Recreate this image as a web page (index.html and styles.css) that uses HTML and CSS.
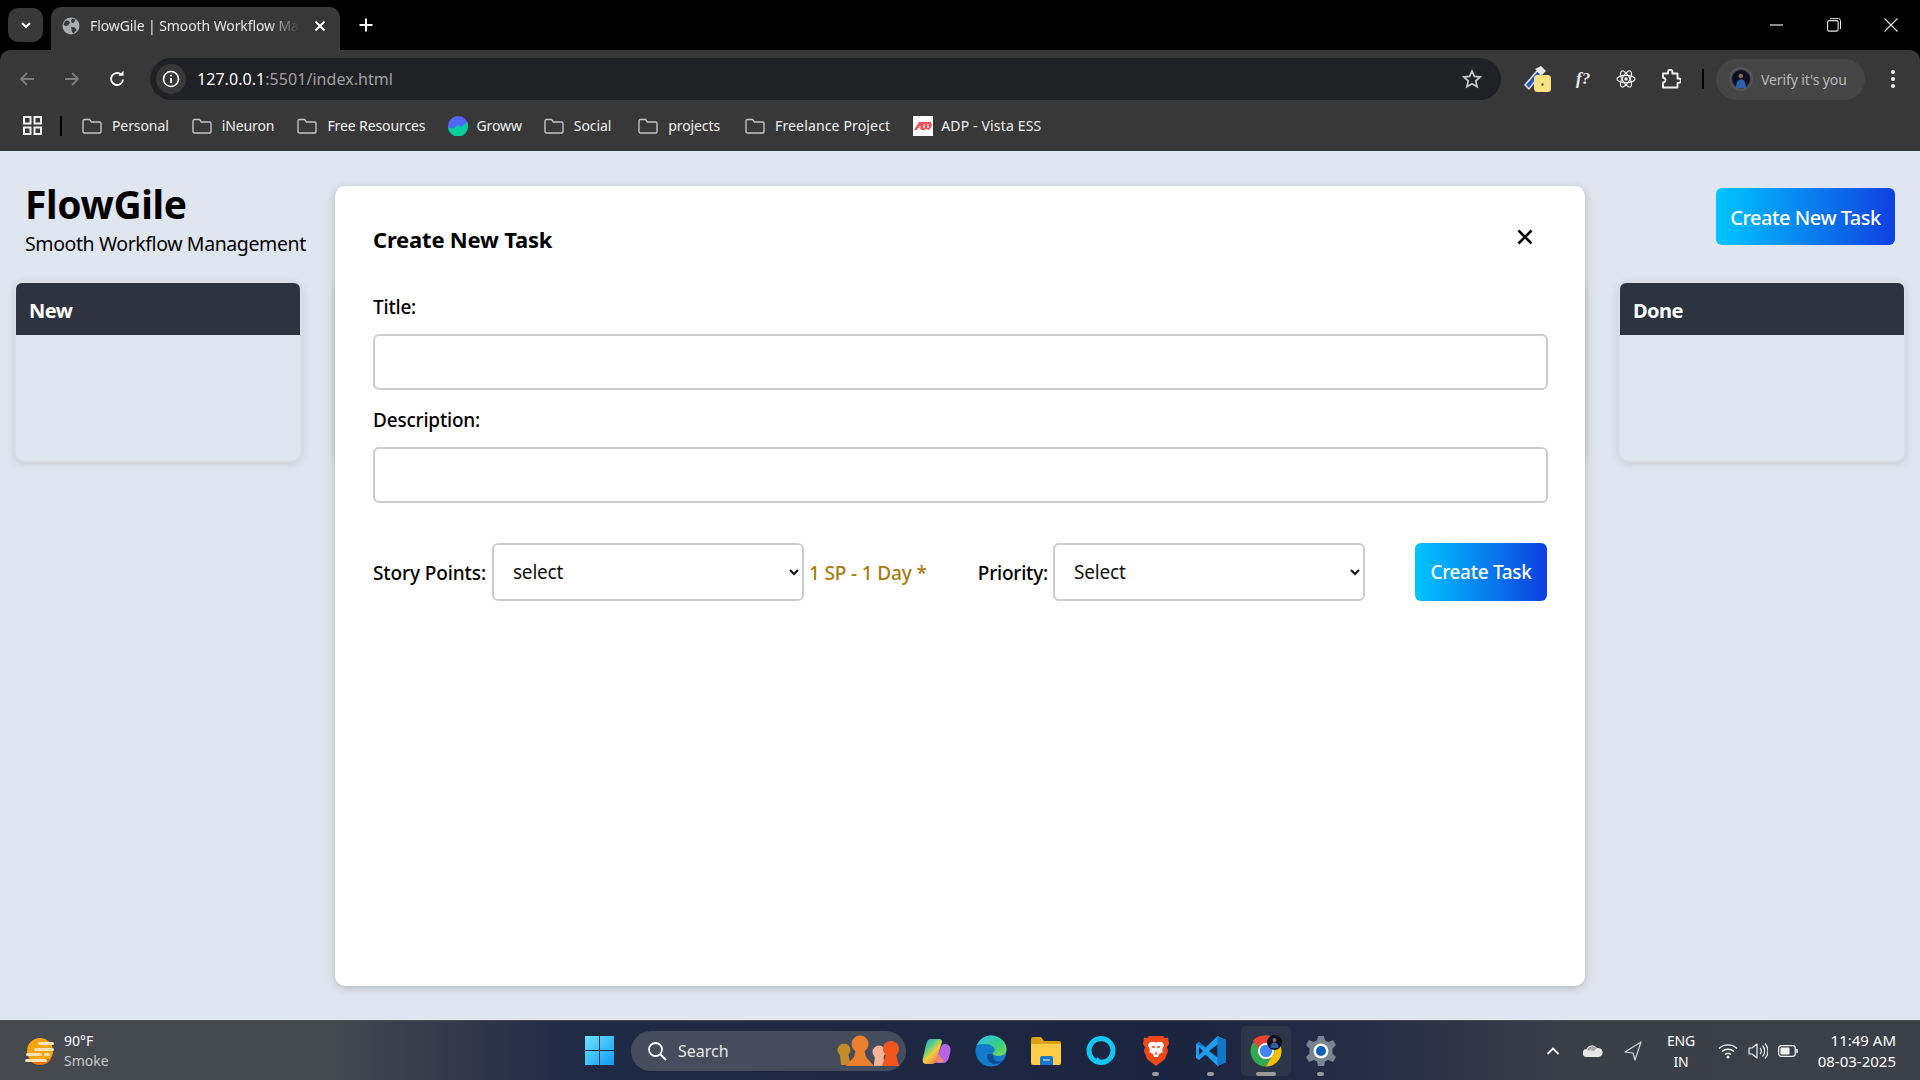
FILE: index.html
```html
<!DOCTYPE html>
<html lang="en">
<head>
  <meta charset="UTF-8"/>
  <meta name="viewport" content="width=device-width, initial-scale=1.0"/>
  <title>FlowGile | Smooth Workflow Management</title>
  <link rel="stylesheet" href="styles.css">
</head>
<body>
  <svg class="defs" width="0" height="0">
    <symbol id="folder" viewBox="0 0 20 16">
      <path d="M1 3a1.5 1.5 0 0 1 1.5-1.5h5l2 2.5h8A1.5 1.5 0 0 1 19 5.500v8a1.500 1.500 0 0 1-1.500 1.500h-15A1.500 1.500 0 0 1 1 13.500z" fill="none" stroke="#c4c4c4" stroke-width="1.400"/>
    </symbol>
  </svg>

  <!-- browser tabs -->
  <div class="tabstrip">
    <div class="tab-search">
      <svg width="14" height="14" viewBox="0 0 14 14"><path d="M3 5l4 4 4-4" fill="none" stroke="#fff" stroke-width="2"/></svg>
    </div>
    <div class="tab">
      <svg width="18" height="18" viewBox="0 0 18 18"><circle cx="9" cy="9" r="8.500" fill="#a9adb2"/><path d="M4 3.500l3 .5 1 2-2 2.500-3 .5-1.500-2zM10 1.500l3.500 1-1.500 3-2 .5-1-2zM9 10l4 .5 1.500 2.500-3 3.500-1.500-1.500z" fill="#383838"/></svg>
      <span class="tab-title">FlowGile | Smooth Workflow Management</span>
      <svg width="14" height="14" viewBox="0 0 14 14"><path d="M2.500 2.500l9 9M11.500 2.500l-9 9" stroke="#fff" stroke-width="1.800"/></svg>
    </div>
    <svg class="tab-plus" width="16" height="16" viewBox="0 0 16 16"><path d="M8 1.500v13M1.500 8h13" stroke="#fff" stroke-width="2"/></svg>
    <div class="win-controls">
      <svg width="14" height="14" viewBox="0 0 14 14"><path d="M0 7h13" stroke="#e8e8e8" stroke-width="1.200"/></svg>
      <svg width="14" height="14" viewBox="0 0 14 14"><rect x=".6" y="2.600" width="10.500" height="10.500" rx="1.500" fill="none" stroke="#e8e8e8" stroke-width="1.100"/><path d="M3 .6h8.500a2 2 0 0 1 2 2V11" fill="none" stroke="#e8e8e8" stroke-width="1"/></svg>
      <svg width="14" height="14" viewBox="0 0 14 14"><path d="M.5.5l13 13M13.500.5l-13 13" stroke="#e8e8e8" stroke-width="1.100"/></svg>
    </div>
  </div>

  <!-- address bar -->
  <div class="toolbar">
    <div class="nav-btns">
      <svg width="18" height="18" viewBox="0 0 18 18"><path d="M16 9H3M9 3L3 9l6 6" fill="none" stroke="#7c7c7c" stroke-width="1.800"/></svg>
      <svg width="18" height="18" viewBox="0 0 18 18"><path d="M2 9h13M9 3l6 6-6 6" fill="none" stroke="#7c7c7c" stroke-width="1.800"/></svg>
      <svg width="18" height="18" viewBox="0 0 18 18"><path d="M15 9.500A6 6 0 1 1 13 4.500" fill="none" stroke="#fff" stroke-width="1.900"/><path d="M10.500 5.800h5V.8z" fill="#fff"/></svg>
    </div>
    <div class="omnibox">
      <div class="site-info">
        <svg width="18" height="18" viewBox="0 0 18 18"><circle cx="9" cy="9" r="7.500" fill="none" stroke="#fff" stroke-width="1.600"/><path d="M9 8v5" stroke="#fff" stroke-width="1.800"/><circle cx="9" cy="5.500" r="1.100" fill="#fff"/></svg>
      </div>
      <span class="url">127.0.0.1<span class="url-dim">:5501/index.html</span></span>
      <svg class="star" width="20" height="20" viewBox="0 0 20 20"><path d="M10 2l2.400 5.400 5.800.6-4.400 3.900 1.300 5.800L10 14.700l-5.100 3 1.300-5.800L1.800 8l5.800-.6z" fill="none" stroke="#c9c9c9" stroke-width="1.700"/></svg>
    </div>
    <div class="ext-icons">
      <svg width="28" height="30" viewBox="0 0 28 30"><path d="M2 21L14 7l4 3L6 25z" fill="#2456c8" stroke="#e8e8e8" stroke-width="1.500"/><path d="M12 5l6-3 5 5-4 4z" fill="#e8e8e8"/><rect x="11" y="11" width="17" height="17" rx="3.500" fill="#fde281"/><rect x="18.500" y="19.500" width="2" height="2" fill="#333"/></svg>
      <span class="ext-fq">f?</span>
      <svg width="20" height="20" viewBox="0 0 20 20"><g fill="none" stroke="#e8e8e8" stroke-width="1.200"><ellipse cx="10" cy="10" rx="9" ry="3.700"/><ellipse cx="10" cy="10" rx="9" ry="3.700" transform="rotate(60 10 10)"/><ellipse cx="10" cy="10" rx="9" ry="3.700" transform="rotate(120 10 10)"/></g><circle cx="10" cy="10" r="1.700" fill="#e8e8e8"/></svg>
      <svg width="20" height="20" viewBox="0 0 20 20"><path d="M2 4.500h5V3a2.200 2.200 0 0 1 4.400 0v1.500h5.100v5h1.200a2.200 2.200 0 0 1 0 4.400h-1.200v4.600H2v-5a2.400 2.400 0 0 0 0-4.800z" fill="none" stroke="#f0f0f0" stroke-width="1.900" stroke-linejoin="round"/></svg>
    </div>
    <div class="toolbar-sep"></div>
    <div class="profile">
      <span class="avatar"><svg width="18" height="18" viewBox="0 0 18 18"><circle cx="9" cy="9" r="9" fill="#0c1020"/><circle cx="8.800" cy="6" r="2.300" fill="#8a6a55"/><path d="M4 18c0-6 2-8.500 5-8.500s5 2.500 5 8.500z" fill="#2f5fa8"/></svg></span>
      <span class="profile-text">Verify it's you</span>
    </div>
    <svg class="kebab" width="6" height="20" viewBox="0 0 6 20"><circle cx="3" cy="3" r="2" fill="#eee"/><circle cx="3" cy="10" r="2" fill="#eee"/><circle cx="3" cy="17" r="2" fill="#eee"/></svg>
  </div>

  <!-- bookmarks -->
  <div class="bookmarks">
    <svg class="apps" width="19" height="19" viewBox="0 0 19 19"><g fill="none" stroke="#f0f0f0" stroke-width="2"><rect x="1" y="1" width="6.500" height="6.500"/><rect x="11.500" y="1" width="6.500" height="6.500"/><rect x="1" y="11.500" width="6.500" height="6.500"/><rect x="11.500" y="11.500" width="6.500" height="6.500"/></g></svg>
    <div class="bm-sep"></div>
    <div class="bm"><svg width="20" height="16"><use href="#folder"/></svg>Personal</div>
    <div class="bm"><svg width="20" height="16"><use href="#folder"/></svg>iNeuron</div>
    <div class="bm"><svg width="20" height="16"><use href="#folder"/></svg>Free Resources</div>
    <div class="bm bm-tight"><svg width="20" height="20" viewBox="0 0 20 20"><circle cx="10" cy="10" r="10" fill="#5367ff"/><path d="M0 11l5 2 5-4 3 2 7-5v4a10 10 0 0 1-20 1z" fill="#00d09c"/></svg>Groww</div>
    <div class="bm"><svg width="20" height="16"><use href="#folder"/></svg>Social</div>
    <div class="bm bm-wide"><svg width="20" height="16"><use href="#folder"/></svg>projects</div>
    <div class="bm bm-last"><svg width="20" height="16"><use href="#folder"/></svg>Freelance Project</div>
    <div class="bm bm-tight bm-last"><svg width="20" height="20" viewBox="0 0 20 20"><rect width="20" height="20" fill="#fff"/><path d="M1 14L6 6h12l1 4-3 4-3-1-2 1H8L7 12H5l-1 2z" fill="#f0505a"/><path d="M6 11h2M11 8v4M15 8v4" stroke="#fff" stroke-width="1.200"/></svg>ADP - Vista ESS</div>
  </div>

  <!-- the page itself -->
  <main class="page">
    <header class="app-header">
      <div class="brand">
        <h1>FlowGile</h1>
        <p>Smooth Workflow Management</p>
      </div>
      <button class="grad-btn new-task">Create New Task</button>
    </header>

    <section class="board">
      <div class="column"><h2>New</h2></div>
      <div class="column"><h2></h2></div>
      <div class="column"><h2></h2></div>
      <div class="column"><h2></h2></div>
      <div class="column"><h2></h2></div>
      <div class="column"><h2>Done</h2></div>
    </section>

    <div class="modal">
      <div class="modal-head">
        <h3>Create New Task</h3>
        <svg class="modal-close" width="16" height="16" viewBox="0 0 16 16"><path d="M1.500 1.500l13 13M14.500 1.500l-13 13" stroke="#000" stroke-width="2.600"/></svg>
      </div>
      <label class="field-label">Title:</label>
      <input class="field" type="text"/>
      <label class="field-label">Description:</label>
      <input class="field" type="text"/>
      <div class="task-row">
        <label class="row-label">Story Points:</label>
        <select class="pick pick-sp"><option>select</option></select>
        <span class="sp-note">1 SP - 1 Day *</span>
        <label class="row-label priority-label">Priority:</label>
        <select class="pick"><option>Select</option></select>
        <button class="grad-btn submit-task">Create Task</button>
      </div>
    </div>
  </main>

  <!-- windows taskbar -->
  <footer class="taskbar">
    <div class="weather">
      <svg width="32" height="32" viewBox="0 0 32 32"><circle cx="16" cy="16" r="13" fill="#f5a30f"/><path d="M5 24a13 13 0 0 0 22 0z" fill="#e8770c"/><g fill="#f6e3b4"><rect x="14" y="7" width="16" height="3" rx="1.500"/><rect x="10" y="13" width="20" height="3" rx="1.500"/><rect x="2" y="18" width="16" height="3" rx="1.500"/><rect x="20" y="18" width="6" height="3" rx="1.500"/><rect x="1" y="24" width="22" height="3" rx="1.500"/></g></svg>
      <div class="weather-text"><span>90°F</span><span class="weather-sub">Smoke</span></div>
    </div>

    <div class="task-apps">
      <svg class="start" width="29" height="29" viewBox="0 0 29 29"><defs><linearGradient id="win" x1="0" y1="0" x2="1" y2="1"><stop offset="0" stop-color="#6fe2ff"/><stop offset="1" stop-color="#0f9bf5"/></linearGradient></defs><path d="M0 0h14v14H0zM15 0h14v14H15zM0 15h14v14H0zM15 15h14v14H15z" fill="url(#win)"/></svg>
      <div class="search-pill">
        <svg width="20" height="20" viewBox="0 0 20 20"><circle cx="8.500" cy="8.500" r="6.500" fill="none" stroke="#fff" stroke-width="1.800"/><path d="M13.500 13.500L19 19" stroke="#fff" stroke-width="2"/></svg>
        <span>Search</span>
        <svg class="search-art" width="64" height="32" viewBox="0 0 64 32"><g fill="#c48a28"><circle cx="8" cy="15" r="6.500"/><path d="M4 19h8l3 11H5z"/></g><g fill="#ea7f2e"><circle cx="24" cy="9" r="8.500"/><path d="M20 14h8l2 8 8 9H10l8-9z"/></g><g fill="#f6b39a"><circle cx="43" cy="17" r="6.500"/><path d="M39 20h8l2 11H38z"/></g><g fill="#f2561d"><circle cx="55" cy="14" r="8"/><path d="M50 19h10l3 12H46z"/></g></svg>
      </div>
      <div class="app-icons">
        <div class="app-slot">
          <svg width="30" height="30" viewBox="0 0 30 30"><defs><linearGradient id="cop" x1="0" y1="0" x2=".8" y2="1"><stop offset="0" stop-color="#1b8fe8"/><stop offset=".35" stop-color="#4fcf8a"/><stop offset=".6" stop-color="#f2cf3c"/><stop offset="1" stop-color="#ee5f5a"/></linearGradient></defs><path d="M13 27h9c3 0 5-2 6-6 1-3 2-7 1-10-1-2-3-3-5-3-2 0-3 1-4 3z" fill="#b765e6"/><path d="M9 3h9c2 0 3 1 3 3l-6 19c-1 2-2 3-4 3H5c-3 0-4-3-3-6l3-13c1-4 2-6 4-6z" fill="url(#cop)"/><path d="M15 25c2 2 6 2 8 0l-6-7z" fill="#f0876a"/></svg>
        </div>
        <div class="app-slot">
          <svg width="32" height="32" viewBox="0 0 32 32"><defs><linearGradient id="edge" x1="0" y1="0" x2="1" y2="1"><stop offset="0" stop-color="#35c1f1"/><stop offset=".6" stop-color="#36cf7f"/><stop offset="1" stop-color="#8ad94c"/></linearGradient></defs><circle cx="16" cy="16" r="15.500" fill="#1379c9"/><path d="M2 10C5 3 11 .5 16 .5c9 0 15.500 7 15.500 13.500 0 5-4 7-8 7-3 0-6-1-6-3 2-1 3-3 1-6-3-3-10-4-16-2z" fill="url(#edge)"/><path d="M12 21c0 5 4 8 8 8 3 0 6-1 8-4-3 2-7 2-9-1-1-2 0-5-2-5-3 0-5 0-5 2z" fill="#0c4f94"/></svg>
        </div>
        <div class="app-slot">
          <svg width="30" height="28" viewBox="0 0 30 28"><path d="M0 2a2 2 0 0 1 2-2h8l3 4h15a2 2 0 0 1 2 2v4H0z" fill="#dda010"/><path d="M0 7h30v19a2 2 0 0 1-2 2H2a2 2 0 0 1-2-2z" fill="#fdcc49"/><path d="M9 21a2 2 0 0 1 2-2h9a2 2 0 0 1 2 2v7H9z" fill="#1b76c9"/><path d="M12 23h7" stroke="#bfe0fa" stroke-width="1.200"/></svg>
        </div>
        <div class="app-slot">
          <svg width="30" height="30" viewBox="0 0 30 30"><circle cx="15" cy="14.500" r="12" fill="none" stroke="#14c6f4" stroke-width="5"/><path d="M9 27l2-6 4 3z" fill="#14c6f4"/></svg>
        </div>
        <div class="app-slot running">
          <svg width="26" height="31" viewBox="0 0 26 31"><path d="M6 1h14l2 2 3-.5L26 9l-2 3 1 4-3 8-9 7-9-7-3-8 1-4-2-3 1-6.500L4 3z" fill="#f1481a"/><path d="M7 7h5l1 1 1-1h5l2 3-2 5 1 2-4 2-1 3h-4l-1-3-4-2 1-2-2-5z" fill="#fff"/><path d="M9 12h3M14 12h3M13 17v3" stroke="#f1481a" stroke-width="1.400"/></svg>
        </div>
        <div class="app-slot running">
          <svg width="30" height="30" viewBox="0 0 30 30"><path d="M21.500 0L30 4v22l-8.500 4-12-11.500L3 24 0 22V8l3-2 6.500 5.500z" fill="#1f9cf0"/><path d="M21.500 0L30 4v22l-8.500 4zM9.500 11.500L3 6 0 8z" fill="#1177c6"/><path d="M21.500 8.500L13 15l8.500 6.500z" fill="#1c2540"/><path d="M3 11l4 4-4 4z" fill="#1c2540"/></svg>
        </div>
        <div class="app-slot active">
          <svg width="32" height="32" viewBox="0 0 32 32"><circle cx="16" cy="16" r="15.500" fill="#34a853"/><path d="M16 .5A15.500 15.500 0 0 1 29.400 8.250H16a8 8 0 0 0-7.500 5L3 5.500A15.500 15.500 0 0 1 16 .5z" fill="#ea4335"/><path d="M29.400 8.250A15.500 15.500 0 0 1 16 31.500l6.500-11.500a8 8 0 0 0 0-11.750z" fill="#fbbc04"/><circle cx="16" cy="16" r="8" fill="#fff"/><circle cx="16" cy="16" r="6.200" fill="#4285f4"/><circle cx="24.500" cy="7.500" r="7.500" fill="#0c1020"/><circle cx="24.500" cy="5" r="2" fill="#8a6a55"/><path d="M20.500 13c0-4 1.500-5.500 4-5.500s4 1.500 4 5.500z" fill="#2f5fa8"/></svg>
        </div>
        <div class="app-slot running">
          <svg width="30" height="30" viewBox="0 0 30 30"><path d="M12 0h6l1 4.500 3.500 1.500L27 4l3 5-3.500 3.500v5L30 21l-3 5-4.500-2-3.500 1.500L18 30h-6l-1-4.500L7.500 24 3 26l-3-5 3.500-3.500v-5L0 9l3-5 4.500 2L11 4.500z" fill="#78858f"/><circle cx="15" cy="15" r="7.500" fill="#fff"/><circle cx="15" cy="15" r="5" fill="#0f5fb5"/></svg>
        </div>
      </div>
    </div>

    <div class="tray">
      <svg width="14" height="10" viewBox="0 0 14 10"><path d="M1.500 8L7 2.500 12.500 8" fill="none" stroke="#fff" stroke-width="1.800"/></svg>
      <svg class="tray-cloud" width="20" height="13" viewBox="0 0 20 13"><path d="M4 13a4 4 0 0 1-.5-8A6 6 0 0 1 14 4a4.500 4.500 0 0 1 2 9z" fill="#e6e6e6"/><path d="M4 6a6 6 0 0 1 10-2l-3 3z" fill="#a8a8a8"/></svg>
      <svg class="tray-loc" width="18" height="20" viewBox="0 0 18 20"><path d="M17 1L1 11l8 1 2 7z" fill="none" stroke="#d5d5d5" stroke-width="1.200" stroke-linejoin="round"/></svg>
      <div class="lang"><span>ENG</span><span>IN</span></div>
      <div class="tray-status">
        <svg width="20" height="16" viewBox="0 0 20 16"><g fill="none" stroke="#f0f0f0" stroke-width="1.400"><path d="M1 5.500a13 13 0 0 1 18 0"/><path d="M4 8.500a9 9 0 0 1 12 0"/><path d="M7 11.500a4.500 4.500 0 0 1 6 0"/></g><circle cx="10" cy="14" r="1.500" fill="#f0f0f0"/></svg>
        <svg width="20" height="18" viewBox="0 0 20 18"><path d="M1 6h3l5-4v14l-5-4H1z" fill="none" stroke="#f0f0f0" stroke-width="1.200" stroke-linejoin="round"/><g fill="none" stroke="#f0f0f0" stroke-width="1.200"><path d="M12 6a4 4 0 0 1 0 6"/><path d="M14.500 3.500a8 8 0 0 1 0 11"/><path d="M17 1.500a11 11 0 0 1 0 15"/></g></svg>
        <svg width="20" height="12" viewBox="0 0 20 12"><rect x=".7" y=".7" width="16.600" height="10.600" rx="2.500" fill="none" stroke="#f0f0f0" stroke-width="1.300"/><rect x="2.500" y="2.500" width="9" height="7" rx="1" fill="#f0f0f0"/><rect x="18.300" y="4" width="1.500" height="4" fill="#f0f0f0"/></svg>
      </div>
      <div class="clock"><span>11:49 AM</span><span>08-03-2025</span></div>
    </div>
  </footer>
</body>
</html>
```

FILE: styles.css
```css
* { box-sizing: border-box; }
html, body { height: 100%; }
body {
  margin: 0;
  display: flex;
  flex-direction: column;
  height: 1080px;
  overflow: hidden;
  font-family: "Noto Sans", "Open Sans", sans-serif;
  color: #000;
  background: #000;
}
.defs { position: absolute; }
svg { display: block; flex-shrink: 0; }

/* tab strip */
.tabstrip {
  height: 50px;
  display: flex;
  align-items: flex-end;
  background: #000;
  padding-left: 8px;
}
.tab-search {
  width: 35px; height: 34px;
  margin-bottom: 8px;
  display: flex; align-items: center; justify-content: center;
  background: #383838;
  border-radius: 10px;
}
.tab {
  width: 289px; height: 43px;
  margin-left: 8px;
  padding: 0 13px 6px 11px;
  display: flex; align-items: center;
  background: #383838;
  border-radius: 10px 10px 0 0;
  color: #e6e6e6;
  font-size: 14px;
}
.tab-title {
  flex: 1;
  margin-left: 10px;
  white-space: nowrap;
  overflow: hidden;
  letter-spacing: -0.1px;
  -webkit-mask-image: linear-gradient(to right, #000 80%, transparent 94%);
  mask-image: linear-gradient(to right, #000 80%, transparent 94%);
}
.tab-plus { margin: 0 0 17px 18px; }
.win-controls {
  margin-left: auto;
  display: flex;
  gap: 43px;
  padding: 0 22px 18px 0;
}

/* toolbar */
.toolbar {
  height: 50px;
  display: flex;
  align-items: center;
  background: #383838;
  border-radius: 10px 10px 0 0;
  padding: 8px 0 0 18px;
}
.nav-btns { display: flex; gap: 27px; }
.omnibox {
  width: 1351px; height: 42px;
  margin-left: 24px;
  padding-left: 6px;
  display: flex; align-items: center;
  background: #202124;
  border-radius: 21px;
}
.site-info {
  width: 30px; height: 30px;
  display: flex; align-items: center; justify-content: center;
  background: #383838;
  border-radius: 50%;
}
.url {
  margin-left: 11px;
  color: #fff;
  font-size: 16px;
  letter-spacing: 0.05px;
}
.url-dim { color: #a0a0a0; }
.star { margin-left: auto; margin-right: 19px; }
.ext-icons {
  display: flex;
  align-items: center;
  gap: 25px;
  margin-left: 22px;
}
.ext-fq {
  font-family: "Liberation Serif", serif;
  font-style: italic;
  font-weight: bold;
  color: #eee;
  font-size: 17px;
  width: 15px;
}
.toolbar-sep { width: 2px; height: 20px; background: #000; margin-left: 21px; }
.profile {
  width: 149px; height: 41px;
  margin-left: 12px;
  padding-left: 13px;
  display: flex; align-items: center;
  background: #454545;
  border-radius: 21px;
  color: #b9b9b9;
  font-size: 14px;
  letter-spacing: -0.1px;
}
.avatar {
  width: 24px; height: 24px;
  display: flex; align-items: center; justify-content: center;
  border: 2px solid #555;
  border-radius: 50%;
  margin-right: 8px;
}
.kebab { margin-left: 25px; }

/* bookmarks */
.bookmarks {
  height: 51px;
  display: flex;
  align-items: center;
  padding-left: 23px;
  background: #383838;
  color: #f0f0f0;
  font-size: 14px;
  letter-spacing: -0.1px;
}
.bm-sep { width: 2px; height: 20px; background: #000; margin: 0 20px 0 18px; }
.bm { display: flex; align-items: center; gap: 10px; margin-right: 23px; }
.bm-tight { gap: 8px; margin-right: 22px; }
.bm-wide { margin-left: 4px; margin-right: 25px; }
.bm-last { letter-spacing: 0.15px; }

/* page */
.page {
  position: relative;
  flex: 1;
  background: #e0e6ef;
  padding: 30px 14px 0;
}
.app-header {
  display: flex;
  justify-content: space-between;
  align-items: flex-start;
  height: 100px;
  padding: 0 11px;
}
.brand h1 {
  margin: 0;
  font-size: 39px;
  line-height: 46px;
  letter-spacing: -0.4px;
}
.brand p {
  margin: 3px 0 0;
  font-size: 19.5px;
  line-height: 28px;
  letter-spacing: -0.4px;
}
.grad-btn {
  border: none;
  border-radius: 6px;
  color: #fff;
  font-family: inherit;
  font-weight: 500;
  background: linear-gradient(to right, #00c6ff, #0f3fe0);
}
.new-task {
  width: 179px; height: 57px;
  margin: 7px 0 0 0;
  padding-top: 2px;
  font-size: 20px;
  letter-spacing: -0.5px;
}
.board { display: flex; justify-content: space-between; }
.column {
  width: 288px; height: 181px;
  background: #e0e6ef;
  border: 2px solid #dcdfe5;
  border-radius: 10px;
  box-shadow: 0 2px 8px rgba(0,0,0,0.12);
}
.column h2 {
  margin: 0;
  height: 52px;
  padding: 2px 13px 0;
  background: #2d3440;
  color: #fff;
  border-radius: 6px 6px 0 0;
  font-size: 20px;
  font-weight: 700;
  line-height: 52px;
  letter-spacing: -0.5px;
}

/* modal sits over the board */
.modal {
  position: absolute;
  left: 335px; top: 35px;
  width: 1250px; height: 800px;
  padding: 36px 37px 36px 38px;
  background: #fff;
  border-radius: 10px;
  box-shadow: 0 2px 10px rgba(0,0,0,0.2);
}
.modal-head {
  display: flex;
  justify-content: space-between;
  align-items: center;
  height: 34px;
  margin-bottom: 38px;
}
.modal-head h3 { margin: 0; font-size: 22px; font-weight: 700; letter-spacing: -0.2px; }
.modal-close { margin-right: 15px; margin-bottom: 5px; }
.field-label {
  display: block;
  font-size: 19px;
  font-weight: 500;
  line-height: 26px;
  letter-spacing: -0.2px;
}
.field {
  display: block;
  width: 100%; height: 56px;
  margin: 14px 0 17px;
  background: #fff;
  border: 2px solid #ccc;
  border-radius: 6px;
}
.task-row {
  display: flex;
  align-items: center;
  margin-top: 40px;
  height: 58px;
  padding-right: 1px;
}
.row-label { font-size: 19px; font-weight: 500; letter-spacing: -0.1px; margin: 2px 6px 0 0; }
.pick {
  width: 312px; height: 58px;
  padding: 0 15px;
  background: #fff;
  border: 2px solid #ccc;
  border-radius: 6px;
  font-family: inherit;
  font-size: 19px;
  color: #111;
  letter-spacing: -0.2px;
}
.sp-note {
  margin: 2px 0 0 5px;
  color: #a67c10;
  font-size: 19px;
  font-weight: 500;
  letter-spacing: -0.15px;
}
.priority-label { margin-left: auto; margin-right: 5px; letter-spacing: -0.2px; }
.submit-task {
  width: 132px; height: 58px;
  margin-left: 50px;
  font-size: 19px;
  letter-spacing: -0.3px;
}

/* taskbar */
.taskbar {
  height: 60px;
  display: flex;
  align-items: center;
  position: relative;
  background: linear-gradient(to right, #45494e 0%, #454a50 17%, #1f2a44 30%, #1c2540 62%, #262f45 72%, #3a3f47 82%, #3c4048 100%);
  border-top: 1px solid #4a4d52;
  color: #fff;
}
.weather { display: flex; align-items: center; width: 585px; padding-left: 24px; }
.weather-text {
  display: flex;
  flex-direction: column;
  margin-left: 8px;
  font-size: 14px;
  line-height: 20px;
}
.weather-sub { color: #c9c9c9; }
.task-apps { display: flex; align-items: center; }
.search-pill {
  width: 275px; height: 40px;
  margin-left: 17px;
  padding-left: 16px;
  display: flex; align-items: center;
  background: #454c5c;
  border-radius: 20px;
  font-size: 16px;
  color: #e8e8e8;
}
.search-pill span { margin-left: 11px; }
.search-art { margin-left: auto; margin-right: 6px; }
.app-icons { display: flex; margin-left: 2px; }
.app-slot {
  position: relative;
  width: 55px; height: 50px;
  display: flex; align-items: center; justify-content: center;
}
.app-slot.active {
  width: 50px;
  margin: 0 2px 0 3px;
  background: #2d3549;
  border-radius: 5px;
}
.running::after, .active::after {
  content: '';
  position: absolute;
  bottom: 0; left: 50%;
  width: 7px; height: 4px;
  margin-left: -3.5px;
  background: #9a9a9a;
  border-radius: 2px;
}
.active::after { width: 20px; margin-left: -10px; }
.tray { margin-left: auto; display: flex; align-items: center; padding-right: 24px; }
.tray-cloud { margin-left: 23px; }
.tray-loc { margin-left: 21px; }
.lang {
  display: flex; flex-direction: column; align-items: center;
  width: 36px;
  margin-left: 21px;
  font-size: 14px;
  line-height: 21px;
  letter-spacing: -0.2px;
}
.tray-status { display: flex; align-items: center; gap: 10px; margin-left: 19px; }
.clock {
  display: flex; flex-direction: column; align-items: flex-end;
  width: 98px;
  font-size: 15px;
  line-height: 21px;
}
```
